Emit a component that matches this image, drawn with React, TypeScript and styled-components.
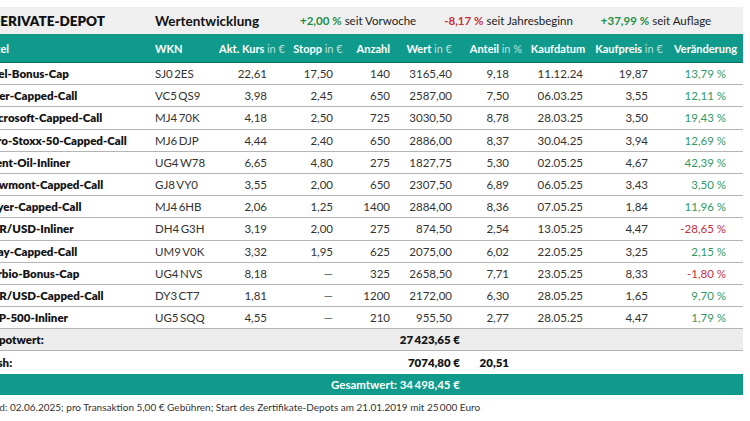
import React from 'react';
import styled, { createGlobalStyle } from 'styled-components';

const Global = createGlobalStyle`
  html, body { margin: 0; padding: 0; background: #fff; }
  body {
    font-family: Lato, "Open Sans", "Liberation Sans", sans-serif;
    width: 750px;
    height: 421px;
    overflow: hidden;
    color: #2b2b2b;
  }
`;

const TEAL = '#0f9a8b';
const GREEN = '#2f9a66';
const RED = '#c62f3f';

type Align = 'left' | 'center' | 'right';
type Col = { w: number; hAlign: Align; hPad: number; dAlign: Align; dPad: number };

const cols: Col[] = [
  { w: 166, hAlign: 'left', hPad: 3, dAlign: 'left', dPad: 0 },
  { w: 66, hAlign: 'left', hPad: 5, dAlign: 'left', dPad: 5 },
  { w: 72, hAlign: 'center', hPad: 0, dAlign: 'right', dPad: 21 },
  { w: 60, hAlign: 'center', hPad: 0, dAlign: 'right', dPad: 15 },
  { w: 48, hAlign: 'right', hPad: 6, dAlign: 'right', dPad: 6 },
  { w: 70, hAlign: 'right', hPad: 14, dAlign: 'right', dPad: 14 },
  { w: 60, hAlign: 'center', hPad: 0, dAlign: 'right', dPad: 17 },
  { w: 64, hAlign: 'center', hPad: 0, dAlign: 'right', dPad: 7 },
  { w: 78, hAlign: 'center', hPad: 0, dAlign: 'right', dPad: 20 },
  { w: 75, hAlign: 'center', hPad: 0, dAlign: 'right', dPad: 17 },
];

const template = cols.map((c) => `${c.w}px`).join(' ');

const Page = styled.div`
  padding-top: 7px;
  margin-left: -16px;
  width: 759px;
`;

const TopBar = styled.div`
  display: flex;
  align-items: center;
  height: 27px;
  background: #efefef;
  white-space: nowrap;
  overflow: hidden;
  & > * { flex-shrink: 0; }
`;

const Title = styled.div`
  width: 166px;
  padding-left: 6px;
  box-sizing: border-box;
  font-weight: 800;
  font-size: 13.5px;
  color: #111;
`;

const SubTitle = styled.div`
  width: 150px;
  padding-left: 5px;
  box-sizing: border-box;
  font-weight: 700;
  font-size: 13.5px;
  color: #111;
`;

const Stat = styled.div`
  font-size: 11.5px;
  color: #222;
  margin-right: 28px;
`;

const StatValue = styled.span<{ $neg?: boolean }>`
  font-weight: 700;
  color: ${(p) => (p.$neg ? RED : '#1f9048')};
`;

const HeadRow = styled.div`
  display: grid;
  grid-template-columns: ${template};
  height: 29px;
  align-items: center;
  background: ${TEAL};
  border-bottom: 1px solid #0b6f64;
  box-sizing: border-box;
  color: #fff;
  font-size: 11px;
  font-weight: 700;
  white-space: nowrap;
`;

const Cell = styled.div<{ $align: Align; $pad: number }>`
  text-align: ${(p) => p.$align};
  padding-left: ${(p) => (p.$align === 'left' ? p.$pad : 0)}px;
  padding-right: ${(p) => (p.$align === 'right' ? p.$pad : 0)}px;
  white-space: nowrap;
  overflow: visible;
`;

const Unit = styled.span`
  font-weight: 400;
  color: rgba(255, 255, 255, 0.72);
`;

const Row = styled.div<{ $bg?: string; $line?: boolean }>`
  display: grid;
  grid-template-columns: ${template};
  height: 22.2px;
  align-items: center;
  box-sizing: border-box;
  background: ${(p) => p.$bg || '#fff'};
  border-bottom: ${(p) => (p.$line === false ? 'none' : '1.5px solid #b4b4b4')};
  font-size: 11.5px;
  color: #333;
`;

const Name = styled(Cell)`
  font-weight: 800;
  color: #141414;
  font-size: 11.5px;
`;

const Bold = styled(Cell)`
  font-weight: 800;
  color: #141414;
  font-size: 11.5px;
`;

const Change = styled(Cell)<{ $neg: boolean }>`
  color: ${(p) => (p.$neg ? RED : GREEN)};
`;

const Dash = styled.span`
  color: #555;
`;

const TotalBar = styled.div`
  display: grid;
  grid-template-columns: ${template};
  height: 21px;
  align-items: center;
  background: ${TEAL};
  color: #fff;
  font-weight: 700;
  font-size: 11.5px;
`;

const Note = styled.div`
  margin-left: -4px;
  padding-top: 6px;
  font-size: 10px;
  color: #333;
  white-space: nowrap;
`;

const NB = '\u202F';
const TH = '\u2009';

type Pos = {
  name: string; wkn: string; kurs: string; stopp: string | null; anzahl: string;
  wert: string; anteil: string; datum: string; preis: string; chg: string;
};

const rows: Pos[] = [
  { name: 'Intel-Bonus-Cap', wkn: `SJ0${TH}2ES`, kurs: '22,61', stopp: '17,50', anzahl: '140', wert: '3165,40', anteil: '9,18', datum: '11.12.24', preis: '19,87', chg: '13,79' },
  { name: 'Uber-Capped-Call', wkn: `VC5${TH}QS9`, kurs: '3,98', stopp: '2,45', anzahl: '650', wert: '2587,00', anteil: '7,50', datum: '06.03.25', preis: '3,55', chg: '12,11' },
  { name: 'Microsoft-Capped-Call', wkn: `MJ4${TH}70K`, kurs: '4,18', stopp: '2,50', anzahl: '725', wert: '3030,50', anteil: '8,78', datum: '28.03.25', preis: '3,50', chg: '19,43' },
  { name: 'Euro-Stoxx-50-Capped-Call', wkn: `MJ6${TH}DJP`, kurs: '4,44', stopp: '2,40', anzahl: '650', wert: '2886,00', anteil: '8,37', datum: '30.04.25', preis: '3,94', chg: '12,69' },
  { name: 'Brent-Oil-Inliner', wkn: `UG4${TH}W78`, kurs: '6,65', stopp: '4,80', anzahl: '275', wert: '1827,75', anteil: '5,30', datum: '02.05.25', preis: '4,67', chg: '42,39' },
  { name: 'Newmont-Capped-Call', wkn: `GJ8${TH}VY0`, kurs: '3,55', stopp: '2,00', anzahl: '650', wert: '2307,50', anteil: '6,89', datum: '06.05.25', preis: '3,43', chg: '3,50' },
  { name: 'Bayer-Capped-Call', wkn: `MJ4${TH}6HB`, kurs: '2,06', stopp: '1,25', anzahl: '1400', wert: '2884,00', anteil: '8,36', datum: '07.05.25', preis: '1,84', chg: '11,96' },
  { name: 'EUR/USD-Inliner', wkn: `DH4${TH}G3H`, kurs: '3,19', stopp: '2,00', anzahl: '275', wert: '874,50', anteil: '2,54', datum: '13.05.25', preis: '4,47', chg: '-28,65' },
  { name: 'eBay-Capped-Call', wkn: `UM9${TH}V0K`, kurs: '3,32', stopp: '1,95', anzahl: '625', wert: '2075,00', anteil: '6,02', datum: '22.05.25', preis: '3,25', chg: '2,15' },
  { name: 'Verbio-Bonus-Cap', wkn: `UG4${TH}NVS`, kurs: '8,18', stopp: null, anzahl: '325', wert: '2658,50', anteil: '7,71', datum: '23.05.25', preis: '8,33', chg: '-1,80' },
  { name: 'EUR/USD-Capped-Call', wkn: `DY3${TH}CT7`, kurs: '1,81', stopp: null, anzahl: '1200', wert: '2172,00', anteil: '6,30', datum: '28.05.25', preis: '1,65', chg: '9,70' },
  { name: 'S&P-500-Inliner', wkn: `UG5${TH}SQQ`, kurs: '4,55', stopp: null, anzahl: '210', wert: '955,50', anteil: '2,77', datum: '28.05.25', preis: '4,47', chg: '1,79' },
];

const headers: React.ReactNode[] = [
  'Titel',
  'WKN',
  <>Akt. Kurs <Unit>in €</Unit></>,
  <>Stopp <Unit>in €</Unit></>,
  'Anzahl',
  <>Wert <Unit>in €</Unit></>,
  <>Anteil <Unit>in %</Unit></>,
  'Kaufdatum',
  <>Kaufpreis <Unit>in €</Unit></>,
  'Veränderung',
];

const d = (i: number) => ({ $align: cols[i].dAlign, $pad: cols[i].dPad });

export default function App() {
  return (
    <>
      <Global />
      <Page>
        <TopBar>
          <Title>DERIVATE-DEPOT</Title>
          <SubTitle>Wertentwicklung</SubTitle>
          <Stat><StatValue>+2,00{NB}%</StatValue> seit Vorwoche</Stat>
          <Stat><StatValue $neg>-8,17{NB}%</StatValue> seit Jahresbeginn</Stat>
          <Stat><StatValue>+37,99{NB}%</StatValue> seit Auflage</Stat>
        </TopBar>
        <HeadRow>
          {headers.map((h, i) => (
            <Cell key={i} $align={cols[i].hAlign} $pad={cols[i].hPad}>{h}</Cell>
          ))}
        </HeadRow>
        {rows.map((r) => (
          <Row key={r.name}>
            <Name {...d(0)}>{r.name}</Name>
            <Cell {...d(1)}>{r.wkn}</Cell>
            <Cell {...d(2)}>{r.kurs}</Cell>
            <Cell {...d(3)}>{r.stopp ?? <Dash>—</Dash>}</Cell>
            <Cell {...d(4)}>{r.anzahl}</Cell>
            <Cell {...d(5)}>{r.wert}</Cell>
            <Cell {...d(6)}>{r.anteil}</Cell>
            <Cell {...d(7)}>{r.datum}</Cell>
            <Cell {...d(8)}>{r.preis}</Cell>
            <Change {...d(9)} $neg={r.chg.startsWith('-')}>{r.chg}{NB}%</Change>
          </Row>
        ))}
        <Row $bg="#ececec">
          <Name {...d(0)}>Depotwert:</Name>
          <Bold $align="right" $pad={6} style={{ gridColumn: '2 / 7' }}>27{TH}423,65 €</Bold>
        </Row>
        <Row $line={false}>
          <Name {...d(0)}>Cash:</Name>
          <Bold $align="right" $pad={6} style={{ gridColumn: '2 / 7' }}>7074,80 €</Bold>
          <Bold {...d(6)}>20,51</Bold>
        </Row>
        <TotalBar>
          <Cell $align="right" $pad={6} style={{ gridColumn: '1 / 7' }}>Gesamtwert: 34{TH}498,45 €</Cell>
        </TotalBar>
        <Note>Stand: 02.06.2025; pro Transaktion 5,00 € Gebühren; Start des Zertifikate-Depots am 21.01.2019 mit 25{TH}000 Euro</Note>
      </Page>
    </>
  );
}
